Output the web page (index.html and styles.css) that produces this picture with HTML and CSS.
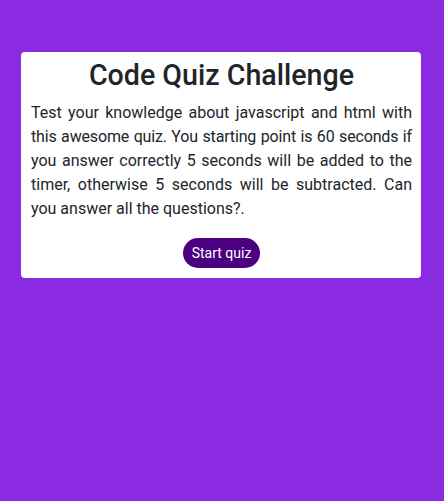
FILE: index.html
```html
<!DOCTYPE html>
<html lang="en">
<head>
<meta charset="utf-8">
<title>Code Quiz</title>
<link rel="stylesheet" href="styles.css">
</head>
<body>
<main class="page">
  <section class="card">
    <h1 class="title">Code Quiz Challenge</h1>
    <p class="intro">Test your knowledge about javascript and html with <span class="tight">this awesome quiz. You starting point is 60 seconds if</span> you answer correctly 5 seconds will be added to the timer, otherwise 5 seconds will be subtracted. Can you answer all the questions?.</p>
    <button class="start-btn" type="button">Start quiz</button>
  </section>
</main>
</body>
</html>
```

FILE: styles.css
```css
html, body {
  margin: 0;
  padding: 0;
}
body {
  background: #8a2be2;
  font-family: Roboto, "Noto Sans", sans-serif;
  color: #212529;
  min-height: 501px;
}
.page {
  padding: 52px 23px 0 21px;
}
.card {
  background: #ffffff;
  border-radius: 4px;
  padding: 6px 9px 10px 10px;
  display: flex;
  flex-direction: column;
  align-items: stretch;
}
.title {
  margin: 0 0 9px 0;
  font-size: 28.6px;
  font-weight: 500;
  line-height: 1.2;
  text-align: center;
}
.intro {
  margin: 0 0 17px 0;
  font-size: 16px;
  line-height: 24px;
  text-align: justify;
}
.tight {
  letter-spacing: -0.15px;
}
.start-btn {
  align-self: center;
  background: #4b0082;
  color: #ffffff;
  border: none;
  border-radius: 15px;
  height: 30px;
  padding: 0 9px;
  font-family: inherit;
  font-size: 14px;
}
```
